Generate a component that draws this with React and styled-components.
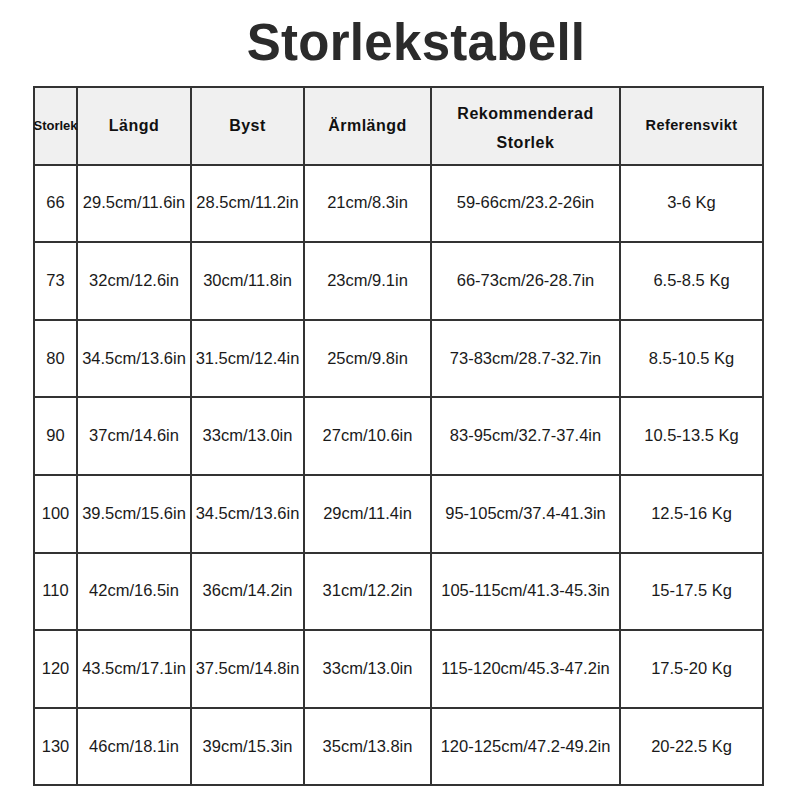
import React from "react";
import styled, { createGlobalStyle } from "styled-components";

const Global = createGlobalStyle`
  html, body { margin: 0; padding: 0; background: #fff; }
  body { font-family: "Liberation Sans", Arial, sans-serif; }
`;

const Page = styled.div`
  width: 800px;
  height: 800px;
  background: #fff;
  display: flex;
  flex-direction: column;
`;

const Title = styled.h1`
  margin: 0;
  height: 86px;
  line-height: 86px;
  font-size: 51px;
  font-weight: 700;
  letter-spacing: 0.3px;
  color: #2b2b2b;
  text-align: center;
  padding-left: 32px;
`;

const Grid = styled.div`
  margin-left: 33px;
  width: 731px;
  box-sizing: border-box;
  display: grid;
  grid-template-columns: 41px 112px 111px 125px 187px 141px;
  grid-auto-rows: 75.6px;
  gap: 2px;
  padding: 2px;
  background: #333;
`;

const Cell = styled.div`
  background: ${(p) => (p.$head ? "#f0f0f0" : "#fff")};
  display: flex;
  align-items: center;
  justify-content: center;
  text-align: center;
  box-sizing: border-box;
  padding-top: ${(p) => p.$pt || "0"};
  color: ${(p) => (p.$head ? "#111" : "#1a1a1a")};
  font-size: ${(p) => p.$size || (p.$head ? "16px" : "16.5px")};
  font-weight: ${(p) => (p.$head ? 700 : 400)};
  letter-spacing: ${(p) => p.$ls || (p.$head ? "0.5px" : "0")};
  line-height: ${(p) => (p.$head ? "29px" : "1.2")};
  white-space: nowrap;
  overflow: visible;
  position: relative;
  z-index: ${(p) => (p.$over ? 1 : 0)};
`;

const headers = [
  { t: "Storlek", size: "13px", ls: "0px", over: true },
  { t: "Längd" },
  { t: "Byst" },
  { t: "Ärmlängd" },
  { t: ["Rekommenderad", "Storlek"], pt: "4px" },
  { t: "Referensvikt", size: "14.5px", ls: "0.4px" },
];

const rows = [
  ["66", "29.5cm/11.6in", "28.5cm/11.2in", "21cm/8.3in", "59-66cm/23.2-26in", "3-6 Kg"],
  ["73", "32cm/12.6in", "30cm/11.8in", "23cm/9.1in", "66-73cm/26-28.7in", "6.5-8.5 Kg"],
  ["80", "34.5cm/13.6in", "31.5cm/12.4in", "25cm/9.8in", "73-83cm/28.7-32.7in", "8.5-10.5 Kg"],
  ["90", "37cm/14.6in", "33cm/13.0in", "27cm/10.6in", "83-95cm/32.7-37.4in", "10.5-13.5 Kg"],
  ["100", "39.5cm/15.6in", "34.5cm/13.6in", "29cm/11.4in", "95-105cm/37.4-41.3in", "12.5-16 Kg"],
  ["110", "42cm/16.5in", "36cm/14.2in", "31cm/12.2in", "105-115cm/41.3-45.3in", "15-17.5 Kg"],
  ["120", "43.5cm/17.1in", "37.5cm/14.8in", "33cm/13.0in", "115-120cm/45.3-47.2in", "17.5-20 Kg"],
  ["130", "46cm/18.1in", "39cm/15.3in", "35cm/13.8in", "120-125cm/47.2-49.2in", "20-22.5 Kg"],
];

export default function App() {
  return (
    <Page>
      <Global />
      <Title>Storlekstabell</Title>
      <Grid>
        {headers.map((h, i) => (
          <Cell key={"h" + i} $head $size={h.size} $ls={h.ls} $over={h.over} $pt={h.pt}>
            {Array.isArray(h.t) ? (
              <span>
                {h.t[0]}
                <br />
                {h.t[1]}
              </span>
            ) : (
              h.t
            )}
          </Cell>
        ))}
        {rows.map((r, ri) =>
          r.map((v, ci) => <Cell key={ri + "-" + ci}>{v}</Cell>)
        )}
      </Grid>
    </Page>
  );
}
